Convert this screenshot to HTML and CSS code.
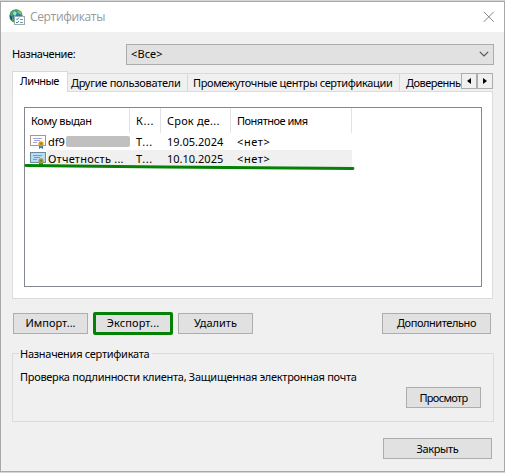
FILE: index.html
```html
<!DOCTYPE html>
<html lang="ru">
<head>
<meta charset="utf-8">
<title>Сертификаты</title>
<link rel="stylesheet" href="styles.css">
</head>
<body>
<main class="dialog">
  <header class="titlebar">
    <svg class="app-icon" width="17" height="17" viewBox="0 0 17 17">
      <circle cx="7" cy="7" r="6.7" fill="#2c7da5"/>
      <path d="M1 4 4 1l4 0-1 3-3 1-1 3 2 2-1 3-3-3z" fill="#4ba84c"/>
      <path d="M9 1l3 2 1 3-3-1-2-2z" fill="#7cc35c"/>
      <path d="M5 2 8 4 6 7 4 5z" fill="#a3d9ee"/>
      <path d="M1 6l2 2v4L1 9z" fill="#194f8c"/>
      <rect x="5.5" y="7.5" width="10" height="8" fill="#fafcfd" stroke="#9dabb2"/>
      <path d="M7 9.7l1 1 2-2M7 13l1 1 2-2" fill="none" stroke="#2489b9"/>
      <path d="M11 10.5h3M11 13.5h3" stroke="#8b9298"/>
    </svg>
    <h1>Сертификаты</h1>
    <svg class="close" width="12" height="12" viewBox="0 0 12 12"><path d="M.8.8l10 10M10.8.8l-10 10" stroke="#858585" fill="none"/></svg>
  </header>

  <div class="purpose">
    <span class="t-purpose">Назначение:</span>
    <div class="select"><span class="t-all">&lt;Все&gt;</span>
      <svg width="10" height="6" viewBox="0 0 10 6"><path d="M.8.8 5 5 9.2.8" fill="none" stroke="#555" stroke-width="1.2"/></svg>
    </div>
  </div>

  <section class="tabs">
    <div class="tab tab-active"><span class="t-personal">Личные</span></div>
    <div class="tab tab-others"><span class="t-others">Другие пользователи</span></div>
    <div class="tab tab-middle"><span class="t-middle">Промежуточные центры сертификации</span></div>
    <div class="tab tab-trusted"><span class="t-trusted">Доверенны</span></div>
    <div class="scroller">
      <span><svg width="4" height="6" viewBox="0 0 4 6"><path d="M4 0v6L0 3z"/></svg></span>
      <span><svg width="4" height="6" viewBox="0 0 4 6"><path d="M0 0v6l4-3z"/></svg></span>
    </div>
  </section>

  <section class="panel">
    <div class="list">
      <div class="row head">
        <span><b class="t-issued">Кому выдан</b></span><span><b class="t-by">К...</b></span><span><b class="t-term">Срок де...</b></span><span><b class="t-name">Понятное имя</b></span>
      </div>
      <div class="row cert">
        <span><svg class="cert-icon" width="17" height="15" viewBox="0 0 17 15"><rect x=".5" y=".5" width="15" height="10" fill="#fffefa" stroke="#a7987f"/><path d="M3 3.5h9M4 5.5h6M3 7.5h4" stroke="#a5a5d5"/><path d="M9 9v5l2-1.3L13 14V9z" fill="#2877d8"/><circle cx="11" cy="8.8" r="2.6" fill="#dda01b"/><circle cx="11" cy="8.8" r="1" fill="#ad7516"/></svg><b class="t-df">df9</b><i class="mask"></i></span><span><b class="t-t">Т...</b></span><span><b class="t-date">19.05.2024</b></span><span><b class="t-no">&lt;нет&gt;</b></span>
      </div>
      <div class="row cert selected">
        <span><svg class="cert-icon" width="17" height="15" viewBox="0 0 17 15"><rect x=".5" y=".5" width="15" height="10" fill="#b9dcf3" stroke="#698b9c"/><path d="M3 3.5h9M4 5.5h6M3 7.5h4" stroke="#6d9fcb"/><path d="M9 9v5l2-1.3L13 14V9z" fill="#247d9b"/><circle cx="11" cy="8.8" r="2.6" fill="#a79b3b"/><circle cx="11" cy="8.8" r="1" fill="#7b752d"/></svg><b class="t-report">Отчетность ...</b></span><span><b class="t-t">Т...</b></span><span><b class="t-date">10.10.2025</b></span><span><b class="t-no">&lt;нет&gt;</b></span>
      </div>
      <svg class="underline" width="332" height="8" viewBox="0 0 332 8"><path d="M2 2.5 140 4 329 5.5" fill="none" stroke="#058205" stroke-width="2.8" stroke-linecap="round"/></svg>
    </div>
  </section>

  <div class="actions">
    <button><span class="t-import">Импорт...</span></button>
    <button class="marked"><span class="t-export">Экспорт...</span></button>
    <button><span class="t-delete">Удалить</span></button>
    <button class="wide push"><span class="t-more">Дополнительно</span></button>
  </div>

  <section class="group">
    <h2><span class="t-group">Назначения сертификата</span></h2>
    <p><span class="t-desc">Проверка подлинности клиента, Защищенная электронная почта</span></p>
    <button class="push"><span class="t-view">Просмотр</span></button>
  </section>

  <footer><button class="wide"><span class="t-close">Закрыть</span></button></footer>
</main>
</body>
</html>
```

FILE: styles.css
```css
* { box-sizing: border-box; }
body {
  margin: 0;
  width: 505px;
  height: 473px;
  overflow: hidden;
  padding-top: 1px;
  background: #d5d5d5;
  color: #000;
  font: 11px/14px "Noto Sans", sans-serif;
}
.dialog {
  display: flex;
  flex-direction: column;
  height: 471px;
  border: 1px solid #a8a8a8;
  background: #f0f0f0;
}
svg { display: block; flex: none; }
span, b { white-space: pre; }
b { font-weight: normal; }

.titlebar {
  display: flex;
  align-items: center;
  height: 30px;
  padding: 0 9px 0 8px;
  background: #fff;
}
h1 {
  margin: 0 auto 0 4px;
  color: #999;
  font: 12px/16px "Open Sans", sans-serif;
  letter-spacing: -.35px;
}

.purpose {
  display: flex;
  align-items: center;
  justify-content: space-between;
  height: 22px;
  margin: 11px 10px 0 11px;
}
.select {
  display: flex;
  align-items: center;
  justify-content: space-between;
  width: 368px;
  height: 21px;
  padding: 0 4px;
  border: 1px solid #adadad;
  background: #e1e1e1;
}

.tabs {
  display: flex;
  align-items: flex-end;
  height: 20px;
  margin: 6px 11px 0;
}
.tab {
  height: 18px;
  padding: 2px 0 0 5px;
  border-top: 1px solid #d9d9d9;
  border-right: 1px solid #d9d9d9;
  overflow: hidden;
}
.tab-active {
  width: 56px;
  height: 21px;
  margin-bottom: -1px;
  padding: 2px 0 0 7px;
  border-left: 1px solid #d9d9d9;
  background: #fff;
  z-index: 1;
}
.tab-others { width: 120px; padding-left: 3px; }
.tab-middle { width: 212px; }
.tab-trusted { width: 61px; padding-left: 6px; border-right: 0; }
.scroller { display: flex; height: 18px; }
.scroller span {
  display: grid;
  place-items: center;
  width: 16px;
  height: 16px;
  border: 1px solid #adadad;
  background: #f0f0f0;
}

.panel {
  height: 208px;
  margin: 0 11px;
  padding: 15px 10px 0 11px;
  border: 1px solid #dcdcdc;
  background: #fff;
}
.list {
  position: relative;
  height: 180px;
  border: 1px solid #828790;
}
.row {
  display: grid;
  grid-template-columns: 105px 31px 70px 121px;
  width: 327px;
  height: 17px;
}
.row > span {
  display: flex;
  align-items: center;
  padding-left: 6px;
}
.head { height: 25px; }
.head > span { border-right: 1px solid #e3e3e3; }
.cert > span:first-child { padding-left: 5px; }
.cert-icon { margin: 1px 1px 0 0; }
.mask { width: 66px; height: 11px; margin-left: 1px; background: #c0c0c0; border-radius: 2px; }
.selected { background: linear-gradient(90deg, #fff 22px, #f0f0f0 22px); }
.underline { position: absolute; left: -1px; top: 55px; }

.actions {
  display: flex;
  align-items: center;
  gap: 5px;
  height: 24px;
  margin: 12px 13px 0 12px;
}
button {
  display: flex;
  align-items: center;
  justify-content: center;
  width: 75px;
  height: 21px;
  padding: 0;
  border: 1px solid #adadad;
  background: #e1e1e1;
  color: #000;
  font: inherit;
}
.marked { width: 80px; height: 23px; border: 3px solid #058205; border-radius: 2px; }
.wide { width: 109px; }
.push { margin-left: auto; }

.group {
  height: 69px;
  margin: 18px 10px 0 11px;
  padding: 0 12px 0 7px;
  border: 1px solid #dcdcdc;
}
h2 {
  width: max-content;
  height: 14px;
  margin: -7px 0 0 -1px;
  padding: 0 3px 0 1px;
  background: #f0f0f0;
  font: inherit;
}
p { height: 14px; margin: 9px 0 3px; }
footer { display: flex; justify-content: flex-end; margin: 16px 12px 0 0; }

/* Tracking per label */
.t-purpose { letter-spacing: -.4px; }
.t-all { letter-spacing: .1px; }
.t-personal { letter-spacing: -.55px; }
.t-others { letter-spacing: -.27px; }
.t-middle { letter-spacing: -.35px; }
.t-trusted { letter-spacing: -.5px; }
.t-issued { letter-spacing: -.35px; }
.t-by { letter-spacing: .6px; }
.t-t { letter-spacing: .6px; }
.t-term { letter-spacing: .2px; }
.t-name { letter-spacing: -.5px; }
.t-no { letter-spacing: .6px; }
.t-report { letter-spacing: .23px; }
.t-export { letter-spacing: .1px; }
.t-more { letter-spacing: -.42px; }
.t-view { letter-spacing: -.65px; }
.t-close { letter-spacing: -.35px; }
.t-group { letter-spacing: -.28px; }
.t-desc { letter-spacing: -.285px; }
```
